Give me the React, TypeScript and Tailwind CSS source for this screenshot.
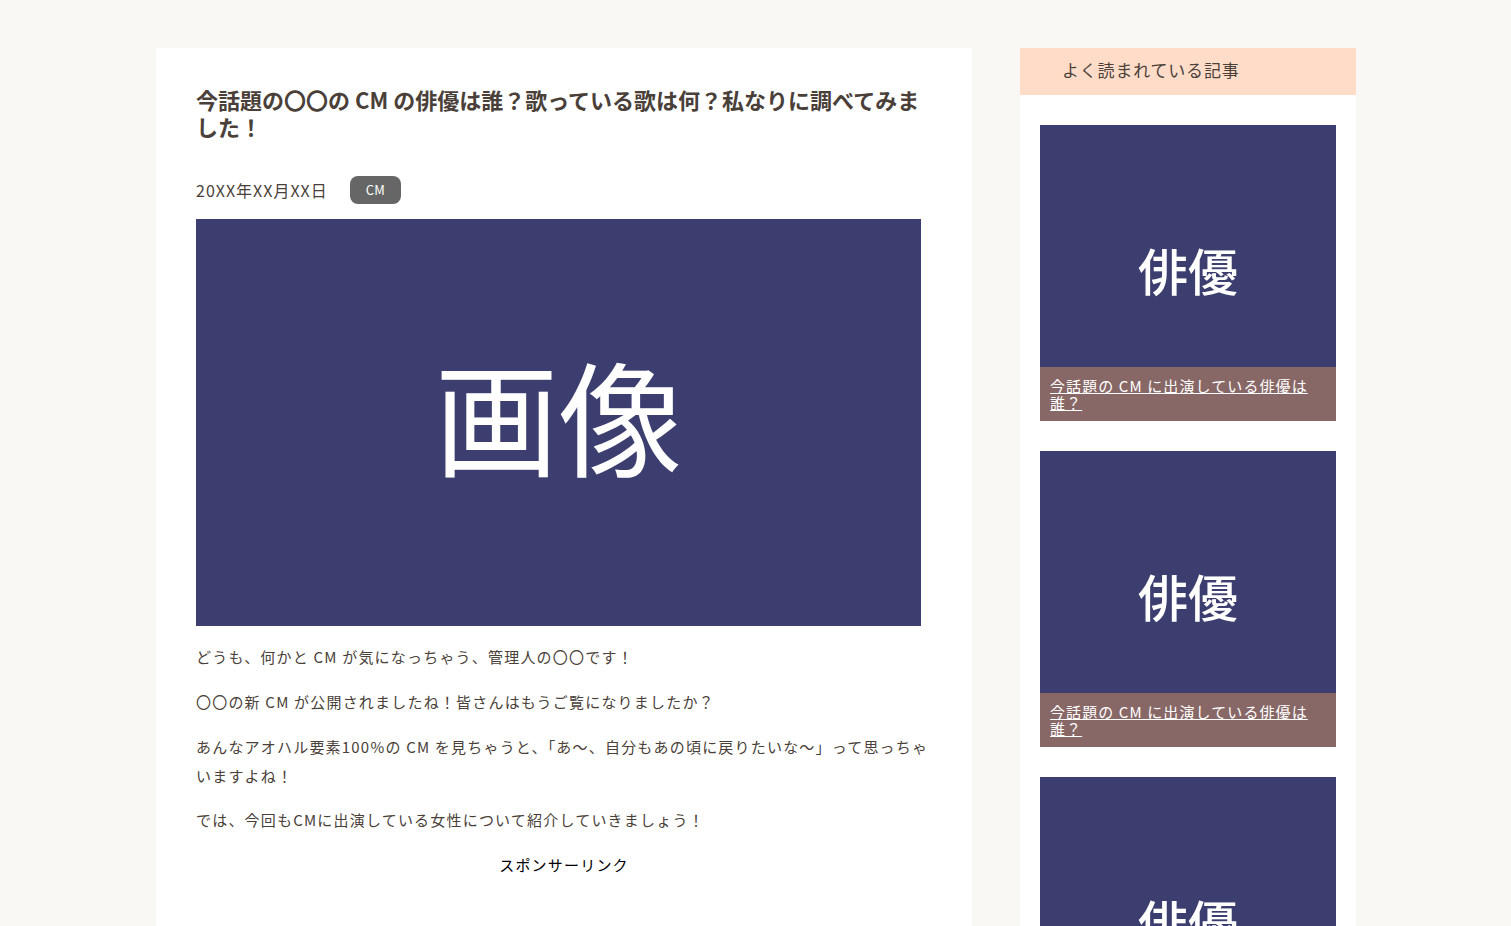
import React from "react";

const jp = { fontFamily: '"Noto Sans CJK JP", "Noto Sans", sans-serif' };

function SideCard() {
  return (
    <div className="flex flex-col">
      <div className="h-[242px] bg-[#3c3e6f] flex items-center justify-center pt-[46px]">
        <span className="text-white text-[50px] font-medium leading-none">俳優</span>
      </div>
      <div className="h-[54px] bg-[#886866] px-[10px] pt-[10px]">
        <a href="#" className="text-white underline text-[15px] leading-[17px] tracking-[1.1px] block">
          今話題の CM に出演している俳優は誰？
        </a>
      </div>
    </div>
  );
}

export default function App() {
  return (
    <div className="min-h-[926px] bg-[#f9f8f5] text-[#4a3f39]" style={jp}>
      <div className="flex gap-[48px] pl-[156px] pt-[48px]">
        <main className="w-[816px] bg-white px-[40px] pt-[38px] pb-[40px] h-[900px]">
          <h1 className="text-[22px] font-bold leading-[27px] text-[#4a3f39] tracking-[0px]">
            今話題の〇〇の CM の俳優は誰？歌っている歌は何？私なりに調べてみました！
          </h1>
          <div className="flex items-center mt-[36px] gap-[22px]">
            <span className="text-[16px] tracking-[1px]">20XX年XX月XX日</span>
            <span className="h-[28px] w-[51px] rounded-[8px] bg-[#666666] text-white text-[13px] flex items-center justify-center">
              CM
            </span>
          </div>
          <div className="mt-[15px] w-[725px] h-[407px] bg-[#3c3e6f] flex items-center justify-center pb-[20px]">
            <span className="text-white text-[124px] leading-none">画像</span>
          </div>
          <div className="mt-[16px] text-[15px] leading-[29px] tracking-[1.2px] text-[#4a3f39]">
            <p>どうも、何かと CM が気になっちゃう、管理人の〇〇です！</p>
            <p className="mt-[16px]">〇〇の新 CM が公開されましたね！皆さんはもうご覧になりましたか？</p>
            <p className="mt-[16px]">
              あんなアオハル要素100%の CM を見ちゃうと、「あ～、自分もあの頃に戻りたいな～」って思っちゃいますよね！
            </p>
            <p className="mt-[15px]">では、今回もCMに出演している女性について紹介していきましょう！</p>
            <p className="mt-[16px] text-center text-black">スポンサーリンク</p>
          </div>
        </main>
        <aside className="w-[336px] bg-white h-[878px] overflow-hidden">
          <div className="h-[47px] bg-[#fedcc8] flex items-center pl-[42px] pb-[3px] text-[17px] tracking-[0.8px] text-[#4a3f39]">
            よく読まれている記事
          </div>
          <div className="px-[20px] pt-[30px] flex flex-col gap-[30px]">
            <SideCard />
            <SideCard />
            <SideCard />
          </div>
        </aside>
      </div>
    </div>
  );
}
